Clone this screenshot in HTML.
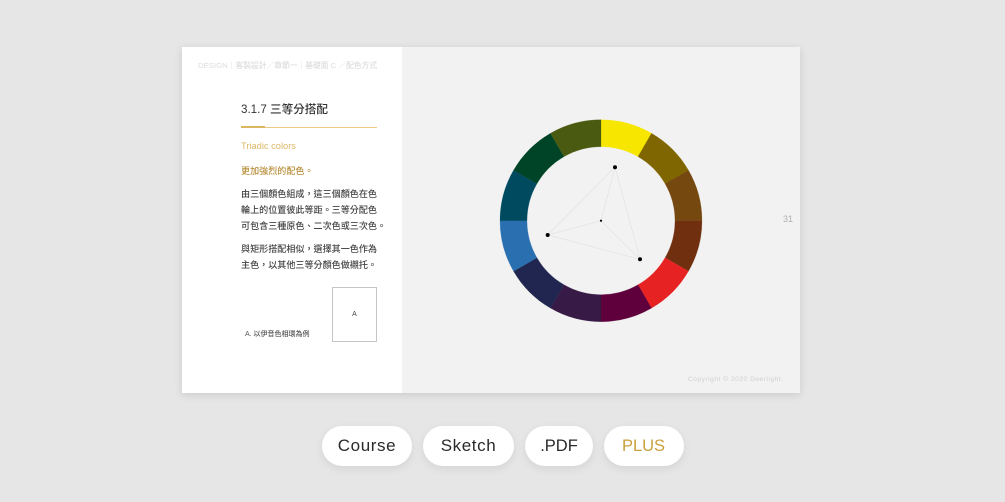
<!DOCTYPE html>
<html>
<head>
<meta charset="utf-8">
<style>
html,body{margin:0;padding:0;width:1005px;height:502px;overflow:hidden;background:#e6e6e6;}
body{position:relative;font-family:"Liberation Sans","Noto Sans CJK TC",sans-serif;}
.a{position:absolute;white-space:nowrap;}
.slide{left:182px;top:47px;width:618px;height:346px;background:#f2f2f2;box-shadow:0 2px 8px rgba(0,0,0,.12);}
.left{left:182px;top:47px;width:220px;height:346px;background:#fff;}
.t{left:241px;font-size:9.07px;line-height:16px;color:#444;font-weight:500;}
.pill{top:426px;height:40px;border-radius:20px;background:#fff;box-shadow:0 3px 9px rgba(0,0,0,.08);text-align:center;line-height:40px;font-size:17px;letter-spacing:.6px;color:#2a2a2a;}
</style>
</head>
<body>
<div class="a slide"></div>
<div class="a left"></div>

<div class="a" style="left:198px;top:60px;font-size:7.75px;line-height:12px;color:#dcdcdc;font-weight:500;">DESIGN｜客製設計／章節一｜基礎面 C ／配色方式</div>
<div class="a" style="left:241px;top:101px;font-size:11.6px;line-height:18px;color:#333;font-weight:500;">3.1.7 三等分搭配</div>
<div class="a" style="left:241px;top:127px;width:136px;height:1px;background:#ecca84;"></div>
<div class="a" style="left:241px;top:125.5px;width:24px;height:2.5px;background:#dcb65e;"></div>
<div class="a" style="left:241px;top:139px;font-size:9.3px;line-height:15px;color:#dfb766;">Triadic colors</div>
<div class="a t" style="top:163px;color:#b8903c;">更加強烈的配色。</div>
<div class="a t" style="top:186px;">由三個顏色組成，這三個顏色在色</div>
<div class="a t" style="top:202px;">輪上的位置彼此等距。三等分配色</div>
<div class="a t" style="top:218px;">可包含三種原色、二次色或三次色。</div>
<div class="a t" style="top:241px;">與矩形搭配相似，選擇其一色作為</div>
<div class="a t" style="top:257px;">主色，以其他三等分顏色做襯托。</div>

<div class="a" style="left:332px;top:287px;width:43px;height:53px;border:1px solid #c4c4c4;text-align:center;line-height:53px;font-size:7px;color:#444;">A</div>
<div class="a" style="left:245px;top:329px;font-size:7px;line-height:11px;color:#555;font-weight:500;">A. 以伊音色相環為例</div>

<div class="a" style="left:783px;top:213px;font-size:9px;line-height:13px;color:#b0b0b0;">31</div>
<div class="a" style="left:688px;top:375px;font-size:6.6px;line-height:10px;letter-spacing:.52px;color:#d0d0d0;">Copyright © 2020 Deerlight.</div>

<svg class="a" style="left:0;top:0;" width="1005" height="502" viewBox="0 0 1005 502">
  <g transform="translate(601 220.7)">
    <path transform="rotate(0)" fill="#f6e600" stroke="#f6e600" stroke-width=".2" d="M0-101A101 101 0 0 1 50.5-87.47L37-64.09A74 74 0 0 0 0-74Z"/>
    <path transform="rotate(30)" fill="#806600" stroke="#806600" stroke-width=".2" d="M0-101A101 101 0 0 1 50.5-87.47L37-64.09A74 74 0 0 0 0-74Z"/>
    <path transform="rotate(60)" fill="#75480f" stroke="#75480f" stroke-width=".2" d="M0-101A101 101 0 0 1 50.5-87.47L37-64.09A74 74 0 0 0 0-74Z"/>
    <path transform="rotate(90)" fill="#70300f" stroke="#70300f" stroke-width=".2" d="M0-101A101 101 0 0 1 50.5-87.47L37-64.09A74 74 0 0 0 0-74Z"/>
    <path transform="rotate(120)" fill="#e62222" stroke="#e62222" stroke-width=".2" d="M0-101A101 101 0 0 1 50.5-87.47L37-64.09A74 74 0 0 0 0-74Z"/>
    <path transform="rotate(150)" fill="#5f003c" stroke="#5f003c" stroke-width=".2" d="M0-101A101 101 0 0 1 50.5-87.47L37-64.09A74 74 0 0 0 0-74Z"/>
    <path transform="rotate(180)" fill="#371a45" stroke="#371a45" stroke-width=".2" d="M0-101A101 101 0 0 1 50.5-87.47L37-64.09A74 74 0 0 0 0-74Z"/>
    <path transform="rotate(210)" fill="#20264f" stroke="#20264f" stroke-width=".2" d="M0-101A101 101 0 0 1 50.5-87.47L37-64.09A74 74 0 0 0 0-74Z"/>
    <path transform="rotate(240)" fill="#2a70b0" stroke="#2a70b0" stroke-width=".2" d="M0-101A101 101 0 0 1 50.5-87.47L37-64.09A74 74 0 0 0 0-74Z"/>
    <path transform="rotate(270)" fill="#004a60" stroke="#004a60" stroke-width=".2" d="M0-101A101 101 0 0 1 50.5-87.47L37-64.09A74 74 0 0 0 0-74Z"/>
    <path transform="rotate(300)" fill="#004428" stroke="#004428" stroke-width=".2" d="M0-101A101 101 0 0 1 50.5-87.47L37-64.09A74 74 0 0 0 0-74Z"/>
    <path transform="rotate(330)" fill="#4a5a10" stroke="#4a5a10" stroke-width=".2" d="M0-101A101 101 0 0 1 50.5-87.47L37-64.09A74 74 0 0 0 0-74Z"/>
  </g>
  <path d="M615 167.3L640 259.3L547.7 235ZM601 220.7L615 167.3M601 220.7L640 259.3M601 220.7L547.7 235" fill="none" stroke="#e2e2e2" stroke-width=".7"/>
  <circle cx="615" cy="167.3" r="2" fill="#000"/>
  <circle cx="640" cy="259.3" r="2" fill="#000"/>
  <circle cx="547.7" cy="235" r="2" fill="#000"/>
  <circle cx="601" cy="220.7" r="1.1" fill="#000"/>
</svg>

<div class="a pill" style="left:322px;width:90px;">Course</div>
<div class="a pill" style="left:423px;width:91px;">Sketch</div>
<div class="a pill" style="left:525px;width:68px;font-size:16.5px;letter-spacing:0;">.PDF</div>
<div class="a pill" style="left:603.5px;width:80px;color:#c9a03c;font-size:16.5px;letter-spacing:0;">PLUS</div>
</body>
</html>
